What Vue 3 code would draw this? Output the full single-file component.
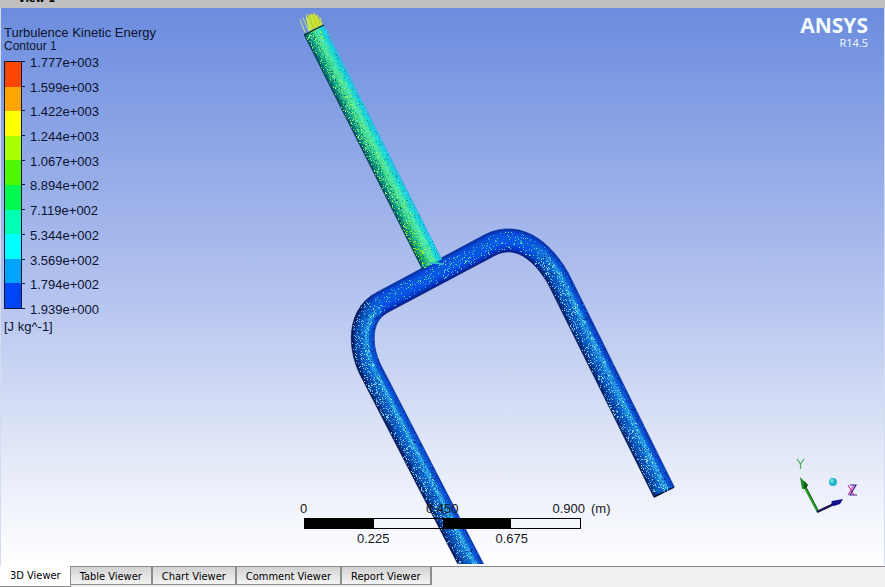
<script setup>
import { ref } from 'vue'

const bands = ['#ff4600', '#ffa600', '#ffff00', '#a8ff00', '#50f800', '#00f850', '#00ffb4', '#00ffff', '#00a4ff', '#0044f8']
const levels = ['1.777e+003', '1.599e+003', '1.422e+003', '1.244e+003', '1.067e+003', '8.894e+002', '7.119e+002', '5.344e+002', '3.569e+002', '1.794e+002', '1.939e+000']
const tabs = ['3D Viewer', 'Table Viewer', 'Chart Viewer', 'Comment Viewer', 'Report Viewer']
const active = ref('3D Viewer')

// Repeatable random numbers, so the particle pattern is the same on every load
let seed = 1234567
function rnd() {
  seed = (seed * 1103515245 + 12345) % 2147483648
  return seed / 2147483648
}

function mix(stops, u) {
  let i = 1
  while (i < stops.length - 1 && stops[i][0] < u) i++
  const [a, ca] = stops[i - 1]
  const [b, cb] = stops[i]
  const k = Math.max(0, Math.min(1, (u - a) / (b - a)))
  return ca.map((c, j) => c + (cb[j] - c) * k)
}
const rgb = (c) => `rgb(${c.map((v) => Math.round(v)).join(',')})`

const legTone = [
  [-1, [2, 14, 70]], [-0.8, [4, 40, 126]], [-0.45, [4, 78, 184]], [0, [6, 104, 210]],
  [0.25, [34, 156, 226]], [0.42, [30, 140, 224]], [0.6, [4, 84, 214]], [0.88, [4, 62, 198]], [1, [2, 40, 150]]
]
const barTone = [
  [-1, [2, 16, 104]], [-0.75, [2, 44, 190]], [-0.3, [2, 76, 236]], [0.2, [6, 88, 226]],
  [0.7, [4, 68, 218]], [0.9, [4, 54, 182]], [1, [3, 36, 130]]
]
const stemTone = [
  [-1, [2, 44, 64]], [-0.8, [6, 106, 108]], [-0.5, [14, 168, 136]], [-0.1, [56, 214, 138]],
  [0.2, [80, 232, 164]], [0.5, [36, 222, 190]], [0.8, [24, 206, 222]], [1, [60, 176, 226]]
]

function bezier(a, b, c, d, n) {
  const out = []
  for (let i = 1; i <= n; i++) {
    const t = i / n
    const m = 1 - t
    out.push([0, 1].map((k) => m * m * m * a[k] + 3 * m * m * t * b[k] + 3 * m * t * t * c[k] + t * t * t * d[k]))
  }
  return out
}

const fork = [
  [481, 576], [370, 361],
  ...bezier([370, 361], [360, 340], [357, 307], [383, 294], 14),
  [490, 237],
  ...bezier([490, 237], [515, 224], [540, 239], [558, 270], 14),
  [664, 484]
]
const stem = [[314, 22], [432, 256]]

function normals(line) {
  return line.map((p, i) => {
    const a = line[Math.max(0, i - 1)]
    const b = line[Math.min(line.length - 1, i + 1)]
    const straightStart = i === 1 && line.length > 2
    const straightEnd = i === line.length - 2 && line.length > 2
    const s = straightStart ? line[0] : straightEnd ? line[i] : a
    const e = straightStart ? line[1] : straightEnd ? line[i + 1] : b
    const l = Math.hypot(e[0] - s[0], e[1] - s[1])
    return [(e[1] - s[1]) / l, -(e[0] - s[0]) / l]
  })
}

function forkColor(t, n) {
  const k = Math.min(1, Math.max(0, (Math.abs(n[0]) - 0.5) / 0.35))
  const leg = mix(legTone, n[0] < 0 ? -t : t)
  const bar = mix(barTone, t)
  return bar.map((v, i) => v + (leg[i] - v) * k)
}

function shade(line, half, color) {
  const ns = normals(line)
  const out = []
  const strips = 16
  for (let i = 0; i < line.length - 1; i++) {
    const mid = [(ns[i][0] + ns[i + 1][0]) / 2, (ns[i][1] + ns[i + 1][1]) / 2]
    for (let s = 0; s < strips; s++) {
      const t0 = -1 + (2 * s) / strips
      const t1 = t0 + 2 / strips
      const pt = (j, t) => `${(line[j][0] + ns[j][0] * t * half).toFixed(1)},${(line[j][1] + ns[j][1] * t * half).toFixed(1)}`
      const c = rgb(color((t0 + t1) / 2, mid))
      out.push({ points: [pt(i, t0), pt(i + 1, t0), pt(i + 1, t1), pt(i, t1)].join(' '), color: c })
    }
  }
  return out
}

const dots = {}
function dot(x, y, color) {
  dots[color] = (dots[color] || '') + `M${Math.round(x)} ${Math.round(y)}h1v1h-1z`
}

function scatter(line, half, density, pick) {
  const ns = normals(line)
  for (let i = 0; i < line.length - 1; i++) {
    const len = Math.hypot(line[i + 1][0] - line[i][0], line[i + 1][1] - line[i][1])
    const count = Math.round(len * half * 2 * density)
    for (let j = 0; j < count; j++) {
      const k = rnd()
      const t = rnd() * 2 - 1
      const n = [0, 1].map((a) => ns[i][a] + (ns[i + 1][a] - ns[i][a]) * k)
      const x = line[i][0] + (line[i + 1][0] - line[i][0]) * k + n[0] * t * half * 0.94
      const y = line[i][1] + (line[i + 1][1] - line[i][1]) * k + n[1] * t * half * 0.94
      const c = pick(t, n, y)
      if (c) dot(x, y, c)
    }
  }
}

const forkShade = shade(fork, 11.5, forkColor)
const stemShade = shade(stem, 11, (t) => mix(stemTone, t))

scatter(fork, 11.5, 0.5, (t, n) => {
  const r = rnd()
  if (Math.abs(n[0]) > 0.7) {
    const u = n[0] < 0 ? -t : t
    if (u > 0.1 && u < 0.5) return r < 0.26 ? '#62d4ee' : r < 0.44 ? '#35b8e8' : r < 0.56 ? '#02408a' : r < 0.62 ? '#a5ecf4' : null
    if (u <= 0.1) return r < 0.25 ? '#86c8e8' : r < 0.38 ? '#2a8fd4' : r < 0.5 ? '#03327c' : null
    return r < 0.2 ? '#0a6be0' : r < 0.32 ? '#032a88' : null
  }
  if (Math.abs(t) > 0.78) return null
  return r < 0.13 ? '#37b8d4' : r < 0.21 ? '#62d8c8' : r < 0.33 ? '#0464b8' : null
})
scatter(stem, 11, 0.55, (t, n, y) => {
  const r = rnd()
  if (t < -0.2) {
    if (y > 215) return r < 0.3 ? '#55e010' : r < 0.48 ? '#b0f040' : r < 0.6 ? '#068058' : null
    return r < 0.2 ? '#a8f08c' : r < 0.35 ? '#48d878' : r < 0.54 ? '#066a6a' : null
  }
  if (t < 0.5) return r < 0.15 ? '#98f060' : r < 0.3 ? '#58f4c0' : r < 0.36 ? '#16b088' : null
  return r < 0.22 ? '#18e8f0' : r < 0.3 ? '#0690a0' : null
})
const dotPaths = Object.entries(dots).map(([color, d]) => ({ color, d }))
</script>

<template>
  <div class="viewer">
    <header class="titlebar"><span>View 1</span></header>

    <main class="scene">
      <svg class="model" viewBox="0 0 883 556" preserveAspectRatio="xMidYMid slice" aria-hidden="true">
        <g transform="translate(-1 0)">
          <polygon v-for="(q, i) in forkShade" :key="'f' + i" :points="q.points" :fill="q.color" :stroke="q.color" stroke-width="0.6" />
          <path d="M654 489L674 479" stroke="#021040" stroke-width="1.5" />
          <polygon v-for="(q, i) in stemShade" :key="'s' + i" :points="q.points" :fill="q.color" :stroke="q.color" stroke-width="0.6" />
          <path d="M422 258Q434 252 443 257" stroke="#35b8c8" stroke-width="2" fill="none" />
          <path v-for="p in dotPaths" :key="p.color" :d="p.d" :fill="p.color" shape-rendering="crispEdges" />
          <g fill="none" stroke-linecap="round">
            <path d="M306 10L312 6L317 8L321 17L309 23Z" fill="#c3e23c" />
            <path d="M300 12l5 12M303 10l6 13M306 7l5 16" stroke="#c8e878" stroke-width="1" />
            <path d="M308 6l6 15M311 6l6 14M314 5l5 13M317 7l4 10M320 10l2 7" stroke="#e4ec28" stroke-width="1" />
            <path d="M309 8l5 14M313 8l5 12M316 7l4 10" stroke="#a8c838" stroke-width="1" />
          </g>
          <path d="M304 27L324 17" stroke="#082820" stroke-width="1.3" />
        </g>
      </svg>

      <div class="top">
        <section class="legend">
          <h1>Turbulence Kinetic Energy</h1>
          <h2>Contour 1</h2>
          <div class="key">
            <div class="ramp"><i v-for="c in bands" :key="c" :style="{ background: c }"></i></div>
            <div class="ticks"><i v-for="l in levels" :key="l"></i></div>
            <ul class="levels"><li v-for="l in levels" :key="l">{{ l }}</li></ul>
          </div>
          <p class="unit">[J kg^-1]</p>
        </section>
        <div class="brand"><strong>ANSYS</strong><span>R14.5</span></div>
      </div>

      <div class="bottom">
        <div class="scale">
          <div class="marks"><span class="first">0</span><span>0.450</span><span>0.900</span></div>
          <span class="metre">(m)</span>
          <div class="rule"><i></i><i></i><i></i><i></i></div>
          <div class="marks under"><span>0.225</span><span>0.675</span></div>
        </div>
        <svg class="triad" width="70" height="64" viewBox="0 0 70 64" role="img" aria-label="Axes">
          <path d="M24 58L8 28" stroke="#2a9a2a" stroke-width="2.4" />
          <path d="M25 58L10 29" stroke="#146414" stroke-width="1" />
          <path d="M6 23L14 31Q12 35 8 35Z" fill="#1d8c24" />
          <path d="M10 27L14 31Q13 34 10 35Z" fill="#0c5a14" />
          <path d="M23 58L42 49" stroke="#10104e" stroke-width="2.4" />
          <path d="M38 47L49 45L46 50L40 52Q36 50 38 47Z" fill="#12128c" />
          <circle cx="39" cy="28" r="4" fill="#22b4c4" />
          <circle cx="38" cy="27" r="2" fill="#5ce0ea" />
          <path d="M3 5L6.500 10L10 5M6.500 10V15" stroke="#45a855" stroke-width="1.200" fill="none" />
          <path d="M54 31L60 41M60 31L54 41" stroke="#d0459c" stroke-width="1.200" />
          <path d="M56 31H62L56 41H63" stroke="#3a2090" stroke-width="1.200" fill="none" />
        </svg>
      </div>
    </main>

    <nav class="tabs">
      <button v-for="t in tabs" :key="t" type="button" :class="{ active: t === active }" @click="active = t">{{ t }}</button>
    </nav>
  </div>
</template>

<style>
body {
  background: #f0f0f0;
}
</style>

<style scoped>
.viewer {
  display: flex;
  flex-direction: column;
  min-height: 100vh;
  font-family: "Liberation Sans", Arial, sans-serif;
  font-size: 13px;
  color: #0c1230;
}
.titlebar {
  display: flex;
  align-items: flex-end;
  height: 8px;
  padding-left: 18px;
  overflow: hidden;
  background: #c0c0c2;
  color: #000;
  font: bold 11px/14px "DejaVu Sans Condensed", "DejaVu Sans", sans-serif;
}
.titlebar span {
  padding-bottom: 2px;
}
.scene {
  position: relative;
  flex: 1;
  display: flex;
  flex-direction: column;
  justify-content: space-between;
  overflow: hidden;
  border: solid #d4dcf0;
  border-width: 0 1px;
  border-bottom: 2px solid #fff;
  background: linear-gradient(#6b8cde, #b5c4ef 52%, #e2e8f8 80%, #fff);
}
.model {
  position: absolute;
  inset: 0;
  width: 100%;
  height: 100%;
}
.top {
  position: relative;
  display: flex;
  justify-content: space-between;
  padding: 17px 16px 0 3px;
}
h1,
h2,
p,
ul {
  margin: 0;
  padding: 0;
  font-weight: normal;
}
h1 {
  font-size: 13px;
  line-height: 16px;
}
h2 {
  font-size: 12px;
  line-height: 10px;
}
.key {
  display: flex;
  align-items: flex-start;
  margin-top: 3px;
}
.ramp {
  display: flex;
  flex-direction: column;
  box-sizing: border-box;
  width: 18px;
  height: 248px;
  margin-top: 7px;
  border: 1px solid #101838;
}
.ramp i {
  flex: 1;
}
.ticks {
  display: flex;
  flex-direction: column;
  justify-content: space-between;
  width: 3px;
  height: 248px;
  margin-top: 7px;
}
.ticks i {
  height: 1px;
  background: #101838;
}
.levels {
  display: flex;
  flex-direction: column;
  justify-content: space-between;
  height: 263px;
  margin: 1px 0 0 5px;
  list-style: none;
  line-height: 16px;
}
.unit {
  line-height: 18px;
}
.brand {
  display: flex;
  flex-direction: column;
  align-items: flex-end;
  margin-top: -12px;
  color: #f4fbff;
  font-family: "Open Sans", "Noto Sans", sans-serif;
}
.brand strong {
  font-size: 21px;
  font-weight: 700;
  line-height: 24px;
}
.brand span {
  font-size: 11px;
  line-height: 12px;
}
.bottom {
  position: relative;
  display: grid;
  grid-template-columns: 1fr auto 1fr;
  align-items: end;
  padding-bottom: 16px;
}
.scale {
  position: relative;
  grid-column: 2;
  width: 277px;
  color: #181820;
}
.marks {
  display: flex;
  justify-content: space-between;
  margin: 0 -4px;
  line-height: 18px;
}
.marks .first {
  width: 32px;
}
.marks.under {
  justify-content: space-around;
  margin: 1px 0 0;
}
.metre {
  position: absolute;
  left: 100%;
  top: 0;
  padding-left: 10px;
  line-height: 18px;
}
.rule {
  display: flex;
  box-sizing: border-box;
  height: 11px;
  border: 1px solid #000;
}
.rule i {
  flex: 1;
}
.rule i:nth-child(odd) {
  background: #000;
}
.triad {
  grid-column: 3;
  justify-self: end;
  margin: 0 20px 30px 0;
}
.tabs {
  display: flex;
  align-items: flex-start;
  height: 21px;
  border-top: 1px solid #8a8a8a;
  box-sizing: border-box;
  background: #f0f0f0;
}
.tabs button {
  box-sizing: border-box;
  height: 18px;
  padding: 0 9px;
  border: 1px solid #8c8c8c;
  border-top: 0;
  border-right-width: 2px;
  border-left: 0;
  background: linear-gradient(#d2d2d2, #f4f4f4);
  color: #000;
  font: 11px/20px "DejaVu Sans Condensed", "DejaVu Sans", sans-serif;
}
.tabs button.active {
  height: 21px;
  margin-top: -1px;
  padding: 0 9px 0 10px;
  border-right-width: 1px;
  background: #fff;
}
</style>
